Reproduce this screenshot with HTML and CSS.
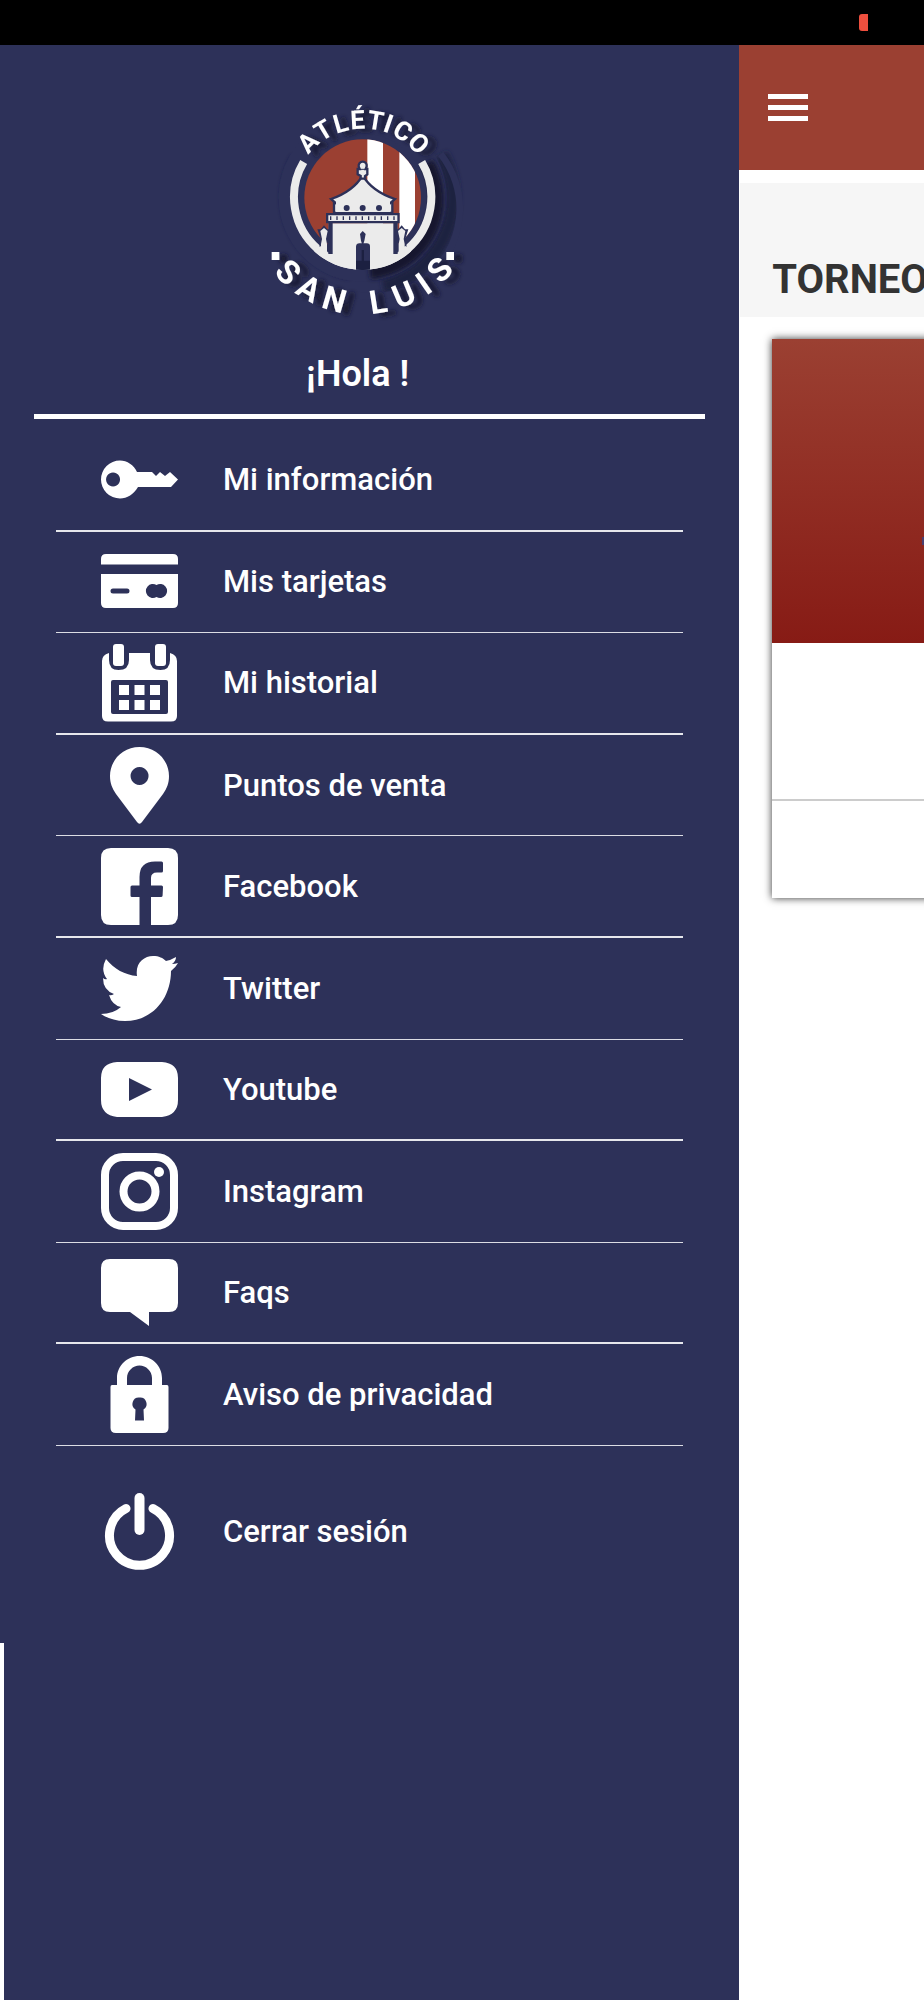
FILE: index.html
```
<!DOCTYPE html>
<html lang="es">
<head>
    <meta charset="UTF-8">
    <meta name="viewport" content="width=device-width, initial-scale=1.0">
    <title>Atlético San Luis</title>
    <link rel="stylesheet" href="styles.css">
</head>
<body>
    <div class="status-bar">
        <span class="battery"></span>
    </div>

    <div class="app">
        <aside class="drawer">
            <div class="profile">
                <svg class="logo" viewBox="0 0 717 720" role="img" aria-label="Atlético San Luis">
                    <defs>
                        <clipPath id="disc"><circle cx="338" cy="323" r="175"/></clipPath>
                        <clipPath id="badge"><circle cx="338" cy="323" r="217"/></clipPath>
                        <filter id="soft" x="-20%" y="-20%" width="140%" height="140%"><feGaussianBlur stdDeviation="8"/></filter>
                        <filter id="drop" x="-20%" y="-20%" width="140%" height="140%"><feDropShadow dx="24" dy="8" stdDeviation="7" flood-color="#14172f" flood-opacity="0.9"/></filter>
                    </defs>
                    <!-- shadow and outer rings -->
                    <path d="M140 205A232 232 0 0 0 300 550" fill="none" stroke="#1d2040" stroke-width="30" filter="url(#soft)"/>
                    <path d="M575 195A272 272 0 0 1 400 590" fill="none" stroke="#1d2040" stroke-width="40" filter="url(#soft)"/>
                    <circle cx="338" cy="323" r="252" fill="#2d3159"/>
                    <path d="M572 192A262 262 0 0 1 160 520" fill="none" stroke="#2d3159" stroke-width="20"/>
                    <path d="M530 220A217 217 0 0 1 360 545" fill="none" stroke="#14172f" stroke-width="44" filter="url(#soft)"/>
                    <circle cx="338" cy="323" r="192" fill="#2d3159"/>
                    <!-- disc -->
                    <g clip-path="url(#disc)">
                        <rect x="150" y="140" width="380" height="370" fill="#9b4032"/>
                        <path d="M352 140h47v360h-47zM448 140h47v360h-47z" fill="#fff"/>
                    </g>
                    <path d="M161 216A206 206 0 1 0 515 216" fill="none" stroke="#ebebeb" stroke-width="24"/>
                    <!-- tower -->
                    <g clip-path="url(#badge)">
                        <path d="M190 470L236 486V400H442V486L486 470L470 560H200Z" fill="#ebebeb"/>
                        <path d="M235 398H248V492H235ZM430 398H443V492H430Z" fill="#2d3159"/>
                        <path d="M228 369H449V400H228Z" fill="#2d3159"/>
                        <path d="M235 376H442V393H235Z" fill="#ebebeb"/>
                        <path d="M240 384.500H440" stroke="#2d3159" stroke-width="11" stroke-dasharray="4 15"/>
                        <path d="M252 330V369H427V330Z" fill="#ebebeb" stroke="#2d3159" stroke-width="7"/>
                        <path d="M243 327Q310 304 338 256Q366 304 435 327L420 340H258Z" fill="#ebebeb" stroke="#2d3159" stroke-width="7"/>
                        <path d="M258 336H420V366H258Z" fill="#ebebeb"/>
                        <circle cx="290" cy="354" r="9" fill="#2d3159"/>
                        <circle cx="338" cy="354" r="9" fill="#2d3159"/>
                        <circle cx="387" cy="354" r="9" fill="#2d3159"/>
                        <path d="M338 215C346 215 351 221 350 229L347 237H352V253L345 258V266H332V258L323 253V237H329L326 229C325 221 331 215 338 215Z" fill="#ebebeb" stroke="#2d3159" stroke-width="7"/>
                        <path d="M331 238H345" stroke="#2d3159" stroke-width="3"/>
                        <path d="M318 545V470Q319 460 328 460H350Q360 460 360 470V545Z" fill="#2d3159"/>
                        <path d="M318 512H335V480H342V512H360V545H318Z" fill="#1c2041"/>
                        <path d="M330 432L338 423L347 432L343 452L340 462H336L333 452Z" fill="#2d3159"/>
                    </g>
                    <!-- street lamps -->
                    <g fill="#2d3159">
                        <path d="M202 418H212L222 406L232 418H242V490L232 486V458L208 470L212 446Z"/>
                        <path d="M435 418H445L455 406L465 418H475L466 446L470 470L446 458V486L435 490Z"/>
                    </g>
                    <g fill="#ebebeb">
                        <path d="M211 423L222 414L233 423L228 447L231 462V492H213V462L216 447Z"/>
                        <path d="M444 423L455 414L466 423L461 447L464 462V492H446V462L449 447Z"/>
                    </g>
                    <g fill="#fff" filter="url(#drop)">
                        <text class="logo-top" x="174 213 259 302 349 396 423 468" y="194 156 131 118 115 123 133 160" rotate="-45 -31 -16 -3 9 19 31 45">ATLÉTICO</text>
                        <text class="logo-bottom" x="69 132 211 300 364 445 529 573" y="549 608 652 670 673 658 617 584" rotate="45 30 16 0 -9 -23 -35 -47">SAN LUIS</text>
                        <path d="M65 486H88V510H65ZM589 486H612V510H589Z"/>
                    </g>
                </svg>
                <h1 class="greeting">¡Hola !</h1>
            </div>

            <nav class="menu">
                <ul class="menu-list">
                    <li>
                        <a href="#">
                            <svg class="icon" viewBox="0 0 77 77"><path fill-rule="evenodd" d="M19 19.500C26 19.500 33 24 36 31H51L55 35L59 31L64 35L69 31L77 38.500L70 46H37C33 53 26 57.500 19 57.500A19 19 0 0 1 19 19.500ZM12 31.500a7 7 0 1 0 .1 0Z"/></svg>
                            <span>Mi información</span>
                        </a>
                    </li>
                    <li>
                        <a href="#">
                            <svg class="icon" viewBox="0 0 77 77"><path d="M5 11H72Q77 11 77 16V21.500H0V16Q0 11 5 11Z"/><path fill-rule="evenodd" d="M0 31H77V60Q77 65 72 65H5Q0 65 0 60ZM12 45.500a2.500 2.500 0 0 0 0 5H26a2.500 2.500 0 0 0 0-5ZM55.500 42A7 7 0 1 0 55.500 54A7 7 0 1 0 55.500 42Z"/></svg>
                            <span>Mis tarjetas</span>
                        </a>
                    </li>
                    <li>
                        <a href="#">
                            <svg class="icon" viewBox="0 0 77 77"><rect x="12" y="0" width="11" height="22" rx="3"/><rect x="54" y="0" width="11" height="22" rx="3"/><path fill-rule="evenodd" d="M8 9V16Q8 26 17.500 26Q28 26 28 16V9H49V16Q49 26 59.500 26Q69 26 69 16V9Q76 11 76 17V72Q76 77.500 70 77.500H7Q1 77.500 1 72V17Q1 11 8 9ZM12 36Q10 36 10 38V68Q10 70 12 70H65Q67 70 67 68V38Q67 36 65 36Z"/><path d="M18 41h10v10h-10zM33.500 41h10v10h-10zM49 41h10v10h-10zM18 56h10v10h-10zM33.500 56h10v10h-10zM49 56h10v10h-10z"/></svg>
                            <span>Mi historial</span>
                        </a>
                    </li>
                    <li>
                        <a href="#">
                            <svg class="icon" viewBox="0 0 77 77"><path fill-rule="evenodd" d="M38.500 0C55 0 68 13 68 29C68 36 66 41 62 47L41 75Q38.500 78.500 36 75L15 47C11 41 9 36 9 29C9 13 22 0 38.500 0ZM38.500 20a9 9 0 1 0 .1 0Z"/></svg>
                            <span>Puntos de venta</span>
                        </a>
                    </li>
                    <li>
                        <a href="#">
                            <svg class="icon" viewBox="0 0 77 77"><path d="M10 0H67Q77 0 77 10V67Q77 77 67 77H50V49H60Q61.500 49 61.600 47.500L62 39Q62 37.500 60.500 37.500H50V30Q50 24.500 56 24.500H60.500Q62 24.500 62 23V15Q62 13.500 60.500 13.500H54Q38.500 13.500 38.500 29V37.500H31Q29.500 37.500 29.500 39V47.500Q29.500 49 31 49H38.500V77H10Q0 77 0 67V10Q0 0 10 0Z"/></svg>
                            <span>Facebook</span>
                        </a>
                    </li>
                    <li>
                        <a href="#">
                            <svg class="icon" viewBox="0 0 77 77"><path d="M5 9C13 19 24 25 36 26C34 13 43 6 52 6C58 6 62 8 65 11Q70 10 75 7Q75 11 71 14Q74 14 77 13Q75 17 70 21C70 48 52 71 24 71C14 71 6 68 0 64Q12 64 20 57Q11 55 8 45Q10 46 13 44Q2 40 2 28Q4 30 6 29Q-1 20 5 9Z"/></svg>
                            <span>Twitter</span>
                        </a>
                    </li>
                    <li>
                        <a href="#">
                            <svg class="icon" viewBox="0 0 77 77"><path fill-rule="evenodd" d="M16 11H61Q77 12 77 27V49Q77 64 61 66H16Q0 64 0 49V27Q0 12 16 11ZM28 27V50L51 38.500Z"/></svg>
                            <span>Youtube</span>
                        </a>
                    </li>
                    <li>
                        <a href="#">
                            <svg class="icon icon-line" viewBox="0 0 77 77"><rect x="4" y="4" width="69" height="69" rx="18"/><circle cx="38.500" cy="38.500" r="16"/><circle class="dot" cx="58" cy="19" r="5"/></svg>
                            <span>Instagram</span>
                        </a>
                    </li>
                    <li>
                        <a href="#">
                            <svg class="icon" viewBox="0 0 77 77"><path d="M9 5H68Q77 5 77 14V49Q77 58 68 58H48V72L29 58H9Q0 58 0 49V14Q0 5 9 5Z"/></svg>
                            <span>Faqs</span>
                        </a>
                    </li>
                    <li>
                        <a href="#">
                            <svg class="icon" viewBox="0 0 77 77"><path fill-rule="evenodd" d="M16 29V22C16 10 26 0 38.500 0S61 10 61 22V29H66Q67.500 29 67.500 31V72Q67.500 77 62 77H15Q9.500 77 9.500 72V31Q9.500 29 11 29ZM26 29H51V22C51 15 45 9.500 38.500 9.500S26 15 26 22ZM38.500 41.500A6.500 6.500 0 0 0 34.500 53.500L34 64.500H43L42.500 53.500A6.500 6.500 0 0 0 38.500 41.500Z"/></svg>
                            <span>Aviso de privacidad</span>
                        </a>
                    </li>
                </ul>
                <a class="logout" href="#">
                    <svg class="icon icon-line" viewBox="0 0 77 77"><path class="power-ring" d="M25 15.500A30 30 0 1 0 52 15.500"/><path class="power-bar" d="M38.500 5V37"/></svg>
                    <span>Cerrar sesión</span>
                </a>
            </nav>
            <div class="drawer-tail"></div>
        </aside>

        <main class="page">
            <header class="toolbar">
                <button class="menu-button" type="button" aria-label="Menú">
                    <span></span>
                    <span></span>
                    <span></span>
                </button>
            </header>
            <h2 class="section-title">TORNEO</h2>
            <article class="card">
                <div class="card-image">
                    <span class="card-crest"></span>
                </div>
                <div class="card-body"></div>
                <div class="card-footer"></div>
            </article>
        </main>
    </div>
</body>
</html>
```

FILE: styles.css
```
* {
    box-sizing: border-box;
}

body {
    margin: 0;
    min-height: 100vh;
    display: flex;
    flex-direction: column;
    font-family: Roboto, sans-serif;
    background-color: white;
}

.status-bar {
    height: 45px;
    padding-right: 56px;
    display: flex;
    align-items: center;
    justify-content: flex-end;
    background-color: black;
}

.battery {
    width: 9px;
    height: 17px;
    border-radius: 3px 0 0 3px;
    background-color: #ee4f3e;
}

.app {
    flex: 1;
    display: flex;
}

.drawer {
    width: 80%;
    display: flex;
    flex-direction: column;
    color: white;
    background-color: #2d3159;
}

.profile {
    margin: 0 34px;
    padding-top: 45px;
    display: flex;
    flex-direction: column;
    align-items: center;
    border-bottom: 5px solid white;
}

.logo {
    width: 239px;
    height: 240px;
}

.logo-top,
.logo-bottom {
    font-family: "Liberation Sans Narrow", Roboto, sans-serif;
    font-weight: bold;
}

.logo-top {
    font-size: 78px;
}

.logo-bottom {
    font-size: 98px;
}

.greeting {
    margin: 0;
    padding: 23px 24px 18px 0;
    font-size: 36px;
    line-height: 43px;
    font-weight: 600;
}

.menu {
    padding: 11px 56px 0;
}

.menu-list {
    min-height: 1016px;
    margin: 0;
    padding: 0;
    display: grid;
    grid-auto-rows: 1fr;
    list-style: none;
}

.menu-list li {
    display: flex;
    border-bottom: 1px solid #dcdde4;
}

.menu-list li:nth-child(odd) {
    border-bottom: 2px solid #e6e7ec;
}

.menu a {
    flex: 1;
    padding-left: 45px;
    display: flex;
    align-items: center;
    gap: 45px;
    color: white;
    font-size: 31px;
    font-weight: 500;
    text-decoration: none;
}

.menu .logout {
    padding: 47px 0 14px 45px;
}

.icon {
    width: 77px;
    height: 77px;
    fill: white;
    overflow: visible;
}

.icon-line {
    fill: none;
    stroke: white;
    stroke-width: 8px;
}

.icon-line .dot {
    fill: white;
    stroke: none;
}

.power-ring {
    stroke-width: 9px;
    stroke-linecap: round;
}

.power-bar {
    stroke-width: 10px;
    stroke-linecap: round;
}

.drawer-tail {
    flex: 1;
    margin-top: 59px;
    border-left: 4px solid white;
}

.page {
    flex: 1;
    min-width: 0;
    overflow: hidden;
}

.toolbar {
    height: 125px;
    padding-left: 29px;
    display: flex;
    align-items: center;
    background-color: #9b4032;
}

.menu-button {
    width: 40px;
    padding: 0;
    display: flex;
    flex-direction: column;
    gap: 6px;
    border: none;
    background: none;
    cursor: pointer;
}

.menu-button span {
    height: 5px;
    background-color: white;
}

.section-title {
    margin: 13px 0 22px 1px;
    padding: 74px 0 14px 32px;
    color: #333;
    background-color: #f6f6f6;
    font-size: 40px;
    line-height: 46px;
    font-weight: 700;
    white-space: nowrap;
}

.card {
    margin-left: 33px;
    margin-right: -20px;
    background-color: white;
    box-shadow: 0 0 8px rgba(0,0,0,0.8);
}

.card-image {
    position: relative;
    height: 304px;
    background-image: linear-gradient(#9b4032, #871b15);
}

.card-crest {
    position: absolute;
    top: 198px;
    left: 150px;
    width: 20px;
    height: 8px;
    background-color: #4a3f70;
}

.card-body {
    height: 158px;
    border-bottom: 2px solid #ccc;
}

.card-footer {
    height: 97px;
}
```
